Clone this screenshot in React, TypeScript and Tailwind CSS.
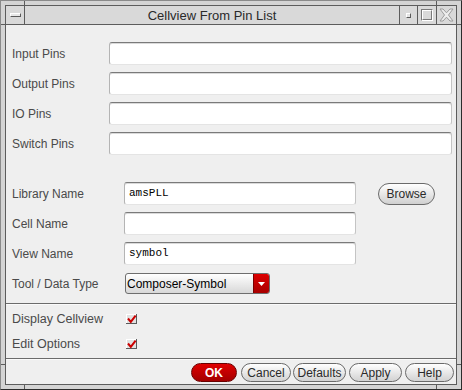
import React from "react";

function Field({ w, value }: { w: string; value?: string }) {
  return (
    <div
      className={`${w} h-[23px] bg-white rounded-[3px] border-t border-t-[#7a7a7a] border-l border-l-[#b4b4b4] border-r border-r-[#c4c4c4] border-b border-b-[#e4e4e4] shadow-[inset_0_1px_0_#dadada] flex items-center pl-[4px] font-['Liberation_Mono',monospace] text-[11px] text-black`}
    >
      {value}
    </div>
  );
}

function Btn({ w, label }: { w: string; label: string }) {
  return (
    <div
      className={`${w} h-[19px] rounded-full border border-[#6a6a6a] bg-gradient-to-b from-white to-[#d2d2d2] flex items-center justify-center text-[12px] text-[#2a2a2a] leading-none`}
    >
      {label}
    </div>
  );
}

function Check() {
  return (
    <svg width="12" height="11" viewBox="0 0 12 11">
      <rect x="0" y="0" width="11" height="10" fill="#e2e2e2" />
      <line x1="0" y1="0.5" x2="11" y2="0.5" stroke="#ffffff" />
      <line x1="0.5" y1="0" x2="0.5" y2="10" stroke="#ffffff" />
      <line x1="0" y1="9.5" x2="11" y2="9.5" stroke="#5a5a5a" />
      <line x1="10.5" y1="0" x2="10.5" y2="10" stroke="#5a5a5a" />
      <path d="M2 4.5 L4.8 7.8 L9.6 1.6" fill="none" stroke="#cc0000" strokeWidth="2" />
    </svg>
  );
}

export default function App() {
  const lbl = "text-[12px] text-[#4a4a4a] whitespace-nowrap";
  return (
    <div className="w-[462px] h-[390px] relative bg-[#d4d4d4] border border-t-[#8a8a8a] border-l-[#8a8a8a] border-r-[#2c2c2c] border-b-[#2c2c2c] p-[4px] font-['Liberation_Sans',Arial,sans-serif]">
      {/* frame resize ticks */}
      <div className="absolute left-[23px] top-0 w-px h-[4px] bg-[#5c5c5c]" />
      <div className="absolute left-[435px] top-0 w-px h-[4px] bg-[#5c5c5c]" />
      <div className="absolute left-[23px] bottom-0 w-px h-[4px] bg-[#5c5c5c]" />
      <div className="absolute left-[435px] bottom-0 w-px h-[4px] bg-[#5c5c5c]" />
      <div className="absolute left-0 top-[23px] w-[4px] h-px bg-[#5c5c5c]" />
      <div className="absolute right-0 top-[23px] w-[4px] h-px bg-[#5c5c5c]" />
      <div className="absolute left-0 top-[363px] w-[4px] h-px bg-[#5c5c5c]" />
      <div className="absolute right-0 top-[363px] w-[4px] h-px bg-[#5c5c5c]" />

      <div className="w-full h-full border border-[#5c5c5c] flex flex-col">
        {/* title bar */}
        <div className="h-[19px] shrink-0 flex border-b border-[#5c5c5c] bg-[#d9d9d9]">
          <div className="w-[19px] border-r border-[#5c5c5c] flex items-center justify-center">
            <div className="w-[11px] h-[4px] bg-[#e8e8e8] border-t border-l border-t-white border-l-white border-b border-r border-b-[#5a5a5a] border-r-[#5a5a5a]" />
          </div>
          <div className="flex-1 border-r border-[#5c5c5c] flex items-center justify-center text-[13px] text-[#2a2a2a] leading-none">
            Cellview From Pin List
          </div>
          <div className="w-[18px] border-r border-[#5c5c5c] flex items-center justify-center">
            <div className="w-[5px] h-[5px] bg-[#e4e4e4] border-t border-l border-t-white border-l-white border-b border-r border-b-[#5a5a5a] border-r-[#5a5a5a]" />
          </div>
          <div className="w-[19px] border-r border-[#5c5c5c] flex items-center justify-center">
            <div className="w-[12px] h-[12px] border border-t-[#7a7a7a] border-l-[#7a7a7a] border-b-white border-r-white">
              <div className="w-full h-full border border-t-white border-l-white border-b-[#7a7a7a] border-r-[#7a7a7a]" />
            </div>
          </div>
          <div className="w-[19px] flex items-center justify-center">
            <svg width="15" height="14" viewBox="0 0 15 14">
              <path
                d="M1 1 L4 1 L7.5 4.8 L11 1 L14 1 L9.5 7 L14 13 L11 13 L7.5 9.2 L4 13 L1 13 L5.5 7 Z"
                fill="#ececec"
                stroke="#9c9c9c"
                strokeWidth="1"
              />
            </svg>
          </div>
        </div>

        {/* content */}
        <div className="flex-1 bg-[#efefef] flex flex-col">
          <div className="pt-[17px] flex flex-col gap-[7px]">
            {["Input Pins", "Output Pins", "IO Pins", "Switch Pins"].map((l) => (
              <div key={l} className="flex items-center h-[23px]">
                <span className={`w-[103px] pl-[6px] ${lbl}`}>{l}</span>
                <Field w="w-[343px]" />
              </div>
            ))}
          </div>

          <div className="mt-[27px] flex flex-col gap-[7px]">
            <div className="flex items-start h-[23px]">
              <span className={`w-[118px] pl-[6px] h-[23px] flex items-center ${lbl}`}>Library Name</span>
              <Field w="w-[232px]" value="amsPLL" />
              <div className="ml-[22px] mt-[1px] w-[57px] h-[22px] rounded-full border border-[#6a6a6a] bg-gradient-to-b from-white to-[#d0d0d0] flex items-center justify-center text-[12px] text-[#2a2a2a]">
                Browse
              </div>
            </div>
            <div className="flex items-center h-[23px]">
              <span className={`w-[118px] pl-[6px] ${lbl}`}>Cell Name</span>
              <Field w="w-[232px]" />
            </div>
            <div className="flex items-center h-[23px]">
              <span className={`w-[118px] pl-[6px] ${lbl}`}>View Name</span>
              <Field w="w-[232px]" value="symbol" />
            </div>
          </div>

          <div className="mt-[8px] flex items-center h-[21px]">
            <span className={`w-[119px] pl-[6px] ${lbl}`}>Tool / Data Type</span>
            <div className="w-[145px] h-[21px] rounded-[3px] border border-[#6e6e6e] bg-gradient-to-b from-white to-[#d8d8d8] flex overflow-hidden">
              <div className="flex-1 flex items-center pl-[1px] text-[12px] text-black whitespace-nowrap">
                Composer-Symbol
              </div>
              <div className="w-[16px] border-l border-[#7a0000] bg-gradient-to-b from-[#dd0000] to-[#a80000] flex items-center justify-center">
                <svg width="7" height="4" viewBox="0 0 7 4">
                  <path d="M0 0 L7 0 L3.5 4 Z" fill="#ffffff" />
                </svg>
              </div>
            </div>
          </div>

          <div className="mt-[9px] h-[2px] border-t border-[#6b6b6b] bg-[#fafafa]" />

          <div className="pt-[2px] flex flex-col">
            <div className="flex items-center h-[25px]">
              <span className="w-[120px] pl-[6px] text-[12.5px] text-[#4a4a4a] whitespace-nowrap">Display Cellview</span>
              <Check />
            </div>
            <div className="flex items-center h-[25px]">
              <span className="w-[120px] pl-[6px] text-[12.5px] text-[#4a4a4a] whitespace-nowrap">Edit Options</span>
              <Check />
            </div>
          </div>

          <div className="mt-[1px] h-[2px] border-t border-[#6b6b6b] bg-[#fafafa]" />

          <div className="pt-[3px] flex justify-end pr-[2px]">
            <div className="w-[46px] h-[19px] rounded-full border border-[#6a0000] bg-gradient-to-b from-[#e00000] to-[#a40000] flex items-center justify-center text-[12px] font-bold text-white leading-none">
              OK
            </div>
            <div className="ml-[4px]"><Btn w="w-[50px]" label="Cancel" /></div>
            <div className="ml-[2px]"><Btn w="w-[53px]" label="Defaults" /></div>
            <div className="ml-[3px]"><Btn w="w-[53px]" label="Apply" /></div>
            <div className="ml-[3px]"><Btn w="w-[49px]" label="Help" /></div>
          </div>
        </div>
      </div>
    </div>
  );
}
